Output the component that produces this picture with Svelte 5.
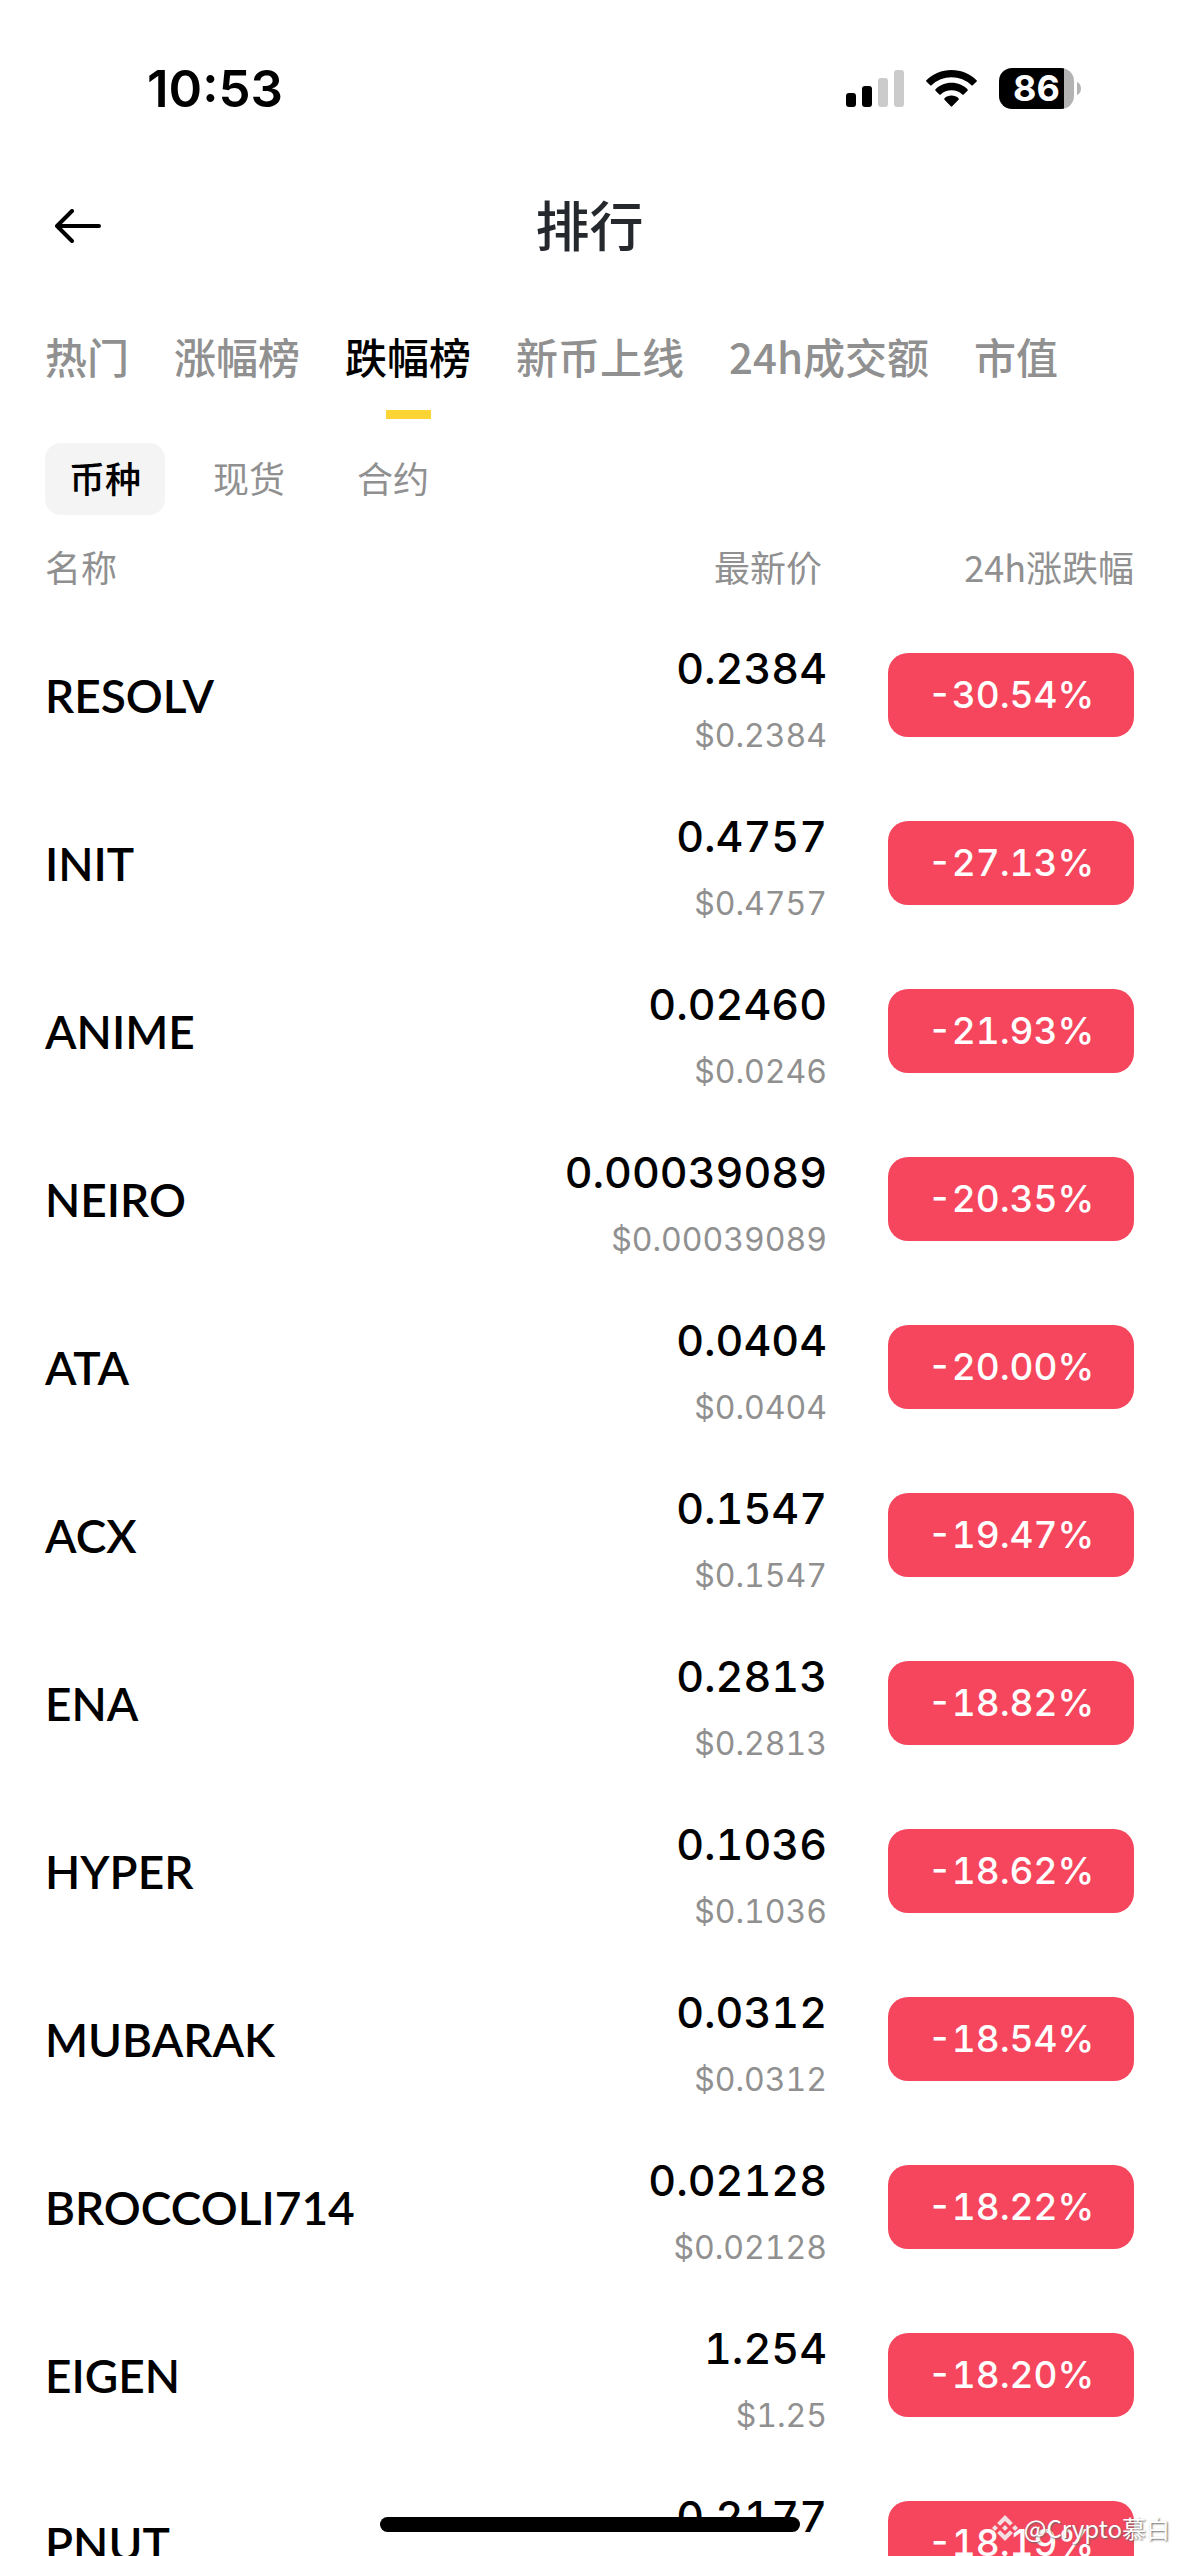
<script lang="ts">
  type Coin = { name: string; price: string; usd: string; change: string };

  const tabs = ['热门', '涨幅榜', '跌幅榜', '新币上线', '24h成交额', '市值'];
  const filters = ['币种', '现货', '合约'];

  const coins: Coin[] = [
    { name: 'RESOLV', price: '0.2384', usd: '$0.2384', change: '-30.54%' },
    { name: 'INIT', price: '0.4757', usd: '$0.4757', change: '-27.13%' },
    { name: 'ANIME', price: '0.02460', usd: '$0.0246', change: '-21.93%' },
    { name: 'NEIRO', price: '0.00039089', usd: '$0.00039089', change: '-20.35%' },
    { name: 'ATA', price: '0.0404', usd: '$0.0404', change: '-20.00%' },
    { name: 'ACX', price: '0.1547', usd: '$0.1547', change: '-19.47%' },
    { name: 'ENA', price: '0.2813', usd: '$0.2813', change: '-18.82%' },
    { name: 'HYPER', price: '0.1036', usd: '$0.1036', change: '-18.62%' },
    { name: 'MUBARAK', price: '0.0312', usd: '$0.0312', change: '-18.54%' },
    { name: 'BROCCOLI714', price: '0.02128', usd: '$0.02128', change: '-18.22%' },
    { name: 'EIGEN', price: '1.254', usd: '$1.25', change: '-18.20%' },
    { name: 'PNUT', price: '0.2177', usd: '$0.2177', change: '-18.19%' },
  ];

  let activeTab = $state('跌幅榜');
  let activeFilter = $state('币种');
</script>

<div class="screen">
  <div class="status">
    <span class="time">10:53</span>
    <div class="indicators">
      <svg width="58" height="37" viewBox="0 0 58 37" aria-hidden="true">
        <rect x="0" y="23" width="10" height="14" rx="3" />
        <rect x="16" y="16" width="10" height="21" rx="3" />
        <rect x="32" y="8" width="10" height="29" rx="3" fill="#cbcbcb" />
        <rect x="48" y="0" width="10" height="37" rx="3" fill="#cbcbcb" />
      </svg>
      <svg width="51" height="37" viewBox="0 0 51 37" aria-hidden="true">
        <path d="M25.5 0C35.300 0 44.300 3.800 50.600 10.200Q51.200 10.900 50.600 11.600L46.800 15.300Q46.200 15.900 45.500 15.300A29 29 0 0 0 5.500 15.300Q4.800 15.900 4.200 15.300L.4 11.600Q-.2 10.900.4 10.200C6.700 3.800 15.700 0 25.500 0Z" />
        <path d="M25.500 12.800C31.800 12.800 37.500 15.200 41.500 19.300Q42.100 20 41.500 20.700L37.700 24.400Q37 25 36.300 24.400A16 16 0 0 0 14.700 24.400Q14 25 13.300 24.400L9.500 20.700Q8.900 20 9.500 19.300C13.500 15.200 19.200 12.800 25.500 12.800Z" />
        <path d="M25.500 25.600C28.300 25.600 30.700 26.600 32.500 28.300Q33.200 29 32.500 29.700L26.200 36.300Q25.500 37 24.800 36.300L18.500 29.700Q17.800 29 18.500 28.300C20.300 26.600 22.700 25.600 25.500 25.600Z" />
      </svg>
      <div class="battery">
        <span class="level">86</span>
        <svg width="4" height="13" viewBox="0 0 4 13" aria-hidden="true">
          <path d="M0 0C5.300 2 5.300 11 0 13Z" fill="#b3b3b3" />
        </svg>
      </div>
    </div>
  </div>

  <header class="nav">
    <button class="back" aria-label="返回">
      <svg width="46" height="34" viewBox="0 0 46 34" fill="none" stroke="#000" stroke-width="4" stroke-linecap="round" stroke-linejoin="round">
        <path d="M17 2 2 17l15 15M2 17h42" />
      </svg>
    </button>
    <h1>排行</h1>
  </header>

  <nav class="tabs">
    {#each tabs as tab}
      <button class="tab" class:active={tab === activeTab} onclick={() => (activeTab = tab)}>
        {tab}
      </button>
    {/each}
  </nav>

  <div class="filters">
    {#each filters as filter}
      <button
        class="filter"
        class:active={filter === activeFilter}
        onclick={() => (activeFilter = filter)}
      >
        {filter}
      </button>
    {/each}
  </div>

  <table>
    <thead>
      <tr>
        <th class="name-head" scope="col">名称</th>
        <th class="price-head" scope="col">最新价</th>
        <th class="change-head" scope="col">24h涨跌幅</th>
      </tr>
    </thead>
    <tbody>
      {#each coins as coin (coin.name)}
        <tr>
          <td class="name">{coin.name}</td>
          <td class="quote">
            <div class="price">{coin.price}</div>
            <div class="usd">{coin.usd}</div>
          </td>
          <td class="change"><div class="badge">{coin.change}</div></td>
        </tr>
      {/each}
    </tbody>
  </table>

  <div class="home-bar"></div>

  <div class="watermark">
    <svg width="26" height="28" viewBox="0 0 28 28" fill="#f3dfe2" aria-hidden="true">
      <path d="M14 0 22.500 8.500 19.300 11.700 14 6.400 8.700 11.700 5.500 8.500ZM3.200 10.800 6.400 14 3.200 17.200 0 14ZM14 10.800 17.200 14 14 17.200 10.800 14ZM24.800 10.800 28 14 24.800 17.200 21.600 14ZM8.700 16.300 14 21.600 19.300 16.300 22.500 19.500 14 28 5.500 19.500Z" />
    </svg>
    <span>@Crypto慕白</span>
  </div>
</div>

<style>
  :global(body) {
    margin: 0;
    background: #fff;
  }

  .screen {
    position: relative;
    height: 100vh;
    overflow: hidden;
    background: #fff;
    color: #000;
    font-family: 'Noto Sans CJK SC', sans-serif;
  }

  button {
    border: 0;
    padding: 0;
    background: none;
    font-family: inherit;
    cursor: pointer;
  }

  svg {
    display: block;
  }

  .status {
    display: flex;
    align-items: center;
    justify-content: space-between;
    height: 176px;
    padding: 0 98px 0 147px;
    font-family: Inter, sans-serif;
  }

  .time {
    font-size: 51px;
    font-weight: 600;
  }

  .indicators {
    display: flex;
    align-items: center;
    gap: 22px;
  }

  .battery {
    display: flex;
    align-items: center;
    gap: 3px;
  }

  .level {
    width: 75px;
    border-radius: 13px;
    background: linear-gradient(to right, #000 65px, #b3b3b3 65px);
    color: #fff;
    font-size: 36px;
    font-weight: 700;
    line-height: 41px;
    text-align: center;
  }

  .nav {
    display: grid;
    grid-template-columns: 1fr auto 1fr;
    align-items: center;
    height: 100px;
    padding: 0 55px;
  }

  .back {
    justify-self: start;
  }

  h1 {
    margin: 0;
    padding-bottom: 4px;
    color: #25282d;
    font-size: 54px;
    font-weight: 500;
    line-height: 80px;
  }

  .tabs {
    display: flex;
    gap: 45px;
    padding: 50px 45px 0;
  }

  .tab {
    display: flex;
    flex-direction: column;
    align-items: center;
    gap: 24px;
    color: #909090;
    font-size: 42px;
    font-weight: 500;
    line-height: 60px;
    white-space: nowrap;
  }

  .tab::after {
    content: '';
    width: 45px;
    height: 9px;
  }

  .tab.active {
    color: #000;
  }

  .tab.active::after {
    background: #fcd535;
  }

  .filters {
    display: flex;
    gap: 24px;
    padding: 24px 45px 0;
  }

  .filter {
    padding: 0 24px 4px;
    border-radius: 16px;
    color: #909090;
    font-size: 36px;
    line-height: 68px;
  }

  .filter.active {
    background: #f4f4f4;
    color: #000;
    font-weight: 500;
  }

  table {
    width: 100%;
    border-collapse: collapse;
  }

  th {
    height: 90px;
    padding: 6px 0 0;
    color: #909090;
    font-size: 36px;
    font-weight: 400;
    line-height: 54px;
    text-align: right;
  }

  .name-head,
  .name {
    padding-left: 45px;
    text-align: left;
  }

  .price-head {
    padding-right: 5px;
  }

  .change-head,
  .change {
    width: 307px;
    padding-right: 45px;
  }

  td {
    height: 168px;
    padding: 0;
    font-family: Inter, sans-serif;
    font-variant-numeric: tabular-nums;
  }

  .name {
    font-family: Lato, sans-serif;
    font-size: 46px;
    font-weight: 600;
  }

  .quote {
    padding-top: 14px;
    height: 154px;
    text-align: right;
  }

  .price {
    font-size: 43px;
    font-weight: 500;
    line-height: 67px;
  }

  .usd {
    color: #909090;
    font-size: 32px;
    line-height: 67px;
  }

  .badge {
    width: 246px;
    margin-left: auto;
    border-radius: 20px;
    background: #f6465d;
    color: #fff;
    font-size: 37px;
    font-weight: 500;
    line-height: 84px;
    text-align: center;
  }

  .home-bar {
    position: absolute;
    bottom: 24px;
    left: 50%;
    width: 420px;
    height: 15px;
    margin-left: -210px;
    border-radius: 8px;
    background: #000;
  }

  .watermark {
    position: absolute;
    right: 9px;
    bottom: 10px;
    display: flex;
    align-items: center;
    gap: 6px;
    color: #fff;
    font-size: 24px;
    line-height: 36px;
    text-shadow: 1px 1px 2px #666;
  }
</style>
